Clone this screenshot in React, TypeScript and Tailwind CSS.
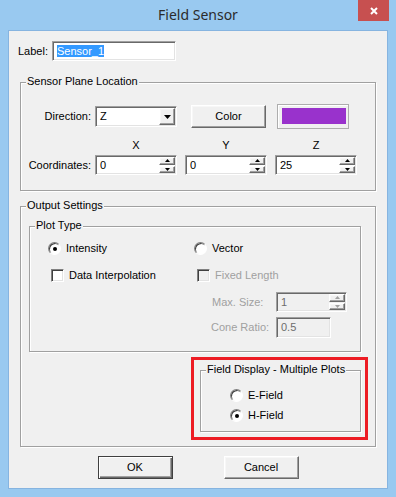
import type { ReactNode } from "react";

const font = "font-['Liberation_Sans',Arial,sans-serif]";
const sunken =
  "border border-t-[#a0a0a0] border-l-[#a0a0a0] border-r-white border-b-white shadow-[inset_1px_1px_0_#696969,inset_-1px_-1px_0_#e3e3e3]";
const raised =
  "border border-t-white border-l-white border-r-[#696969] border-b-[#696969] shadow-[inset_-1px_-1px_0_#a0a0a0,inset_1px_1px_0_#f7f7f7]";

function Group({ title, className, children }: { title: string; className: string; children?: ReactNode }) {
  return (
    <div className={`relative border border-[#a0a0a0] shadow-[inset_1px_1px_0_#fff,1px_1px_0_#fff] ${className}`}>
      <span className="absolute left-[5px] -top-[8px] px-[1px] bg-[#f0f0f0] leading-[13px] whitespace-nowrap">
        {title}
      </span>
      {children}
    </div>
  );
}

function Arrow({ up, w = 5, h = 3, color = "#000" }: { up?: boolean; w?: number; h?: number; color?: string }) {
  return (
    <svg width={w} height={h} viewBox={`0 0 ${w} ${h}`}>
      <path d={up ? `M0 ${h}L${w / 2} 0L${w} ${h}Z` : `M0 0L${w} 0L${w / 2} ${h}Z`} fill={color} />
    </svg>
  );
}

function Spin({ value, w, disabled }: { value: string; w: string; disabled?: boolean }) {
  return (
    <div className={`${w} h-[20px] ${sunken} ${disabled ? "bg-[#f0f0f0] text-[#6d6d6d]" : "bg-white"} flex items-center`}>
      <span className="flex-1 pl-[4px] leading-[13px]">{value}</span>
      <div className="w-[16px] h-full py-[1px] mr-[1px] flex flex-col gap-[1px]">
        <div className={`flex-1 ${raised} bg-[#f0f0f0] flex items-center justify-center`}>
          <Arrow up color={disabled ? "#a0a0a0" : "#000"} />
        </div>
        <div className={`flex-1 ${raised} bg-[#f0f0f0] flex items-center justify-center`}>
          <Arrow color={disabled ? "#a0a0a0" : "#000"} />
        </div>
      </div>
    </div>
  );
}

function Radio({ checked, label }: { checked?: boolean; label: string }) {
  return (
    <div className="flex items-center h-[13px]">
      <span className="w-[13px] h-[13px] rounded-full border border-t-[#808080] border-l-[#808080] border-r-white border-b-white bg-white shadow-[inset_1px_1px_0_#404040] flex items-center justify-center">
        {checked && <span className="w-[4px] h-[4px] rounded-full bg-black" />}
      </span>
      <span className="ml-[5px] leading-[13px]">{label}</span>
    </div>
  );
}

function Check({ label, disabled }: { label: string; disabled?: boolean }) {
  return (
    <div className="flex items-center h-[13px] ml-[3px]">
      <span
        className={`w-[13px] h-[13px] border border-t-[#808080] border-l-[#808080] border-r-white border-b-white shadow-[inset_1px_1px_0_#404040,inset_-1px_-1px_0_#e3e3e3] ${
          disabled ? "bg-[#f0f0f0]" : "bg-white"
        }`}
      />
      <span className={`ml-[5px] leading-[13px] ${disabled ? "text-[#a0a0a0]" : ""}`}>{label}</span>
    </div>
  );
}

function Button({ label, def, className = "" }: { label: string; def?: boolean; className?: string }) {
  return (
    <div
      className={`w-[75px] h-[23px] bg-[#f0f0f0] flex items-center justify-center leading-[13px] ${
        def
          ? "border border-[#404040] shadow-[inset_1px_1px_0_#fff,inset_-1px_-1px_0_#696969,inset_-2px_-2px_0_#a0a0a0]"
          : raised
      } ${className}`}
    >
      {label}
    </div>
  );
}

export default function App() {
  return (
    <div className={`w-[396px] h-[497px] bg-[#99c9f0] flex flex-col ${font} text-[11px] text-black`}>
      <div className="relative h-[30px] flex items-center justify-center">
        <span className="font-['Noto_Sans',sans-serif] text-[14px] text-[#2b2b2b] leading-none">Field Sensor</span>
        <div className="absolute right-[7px] top-0 w-[31px] h-[21px] bg-[#c75050] flex items-center justify-center">
          <svg width="8" height="8" viewBox="0 0 8 8">
            <path d="M1 1L7 7M7 1L1 7" stroke="white" strokeWidth="2" />
          </svg>
        </div>
      </div>

      <div className="mx-[8px] h-[459px] bg-[#f0f0f0] border border-[#86b4e0] px-[11px] flex flex-col">
        {/* Label */}
        <div className="mt-[10px] -ml-[2px] flex items-center">
          <span className="w-[34px] leading-[13px]">Label:</span>
          <div className={`w-[124px] h-[20px] bg-white ${sunken} flex items-center pl-[4px]`}>
            <span className="bg-[#3399ff] text-white leading-[12px]">Sensor_1</span>
          </div>
        </div>

        {/* Sensor Plane Location */}
        <Group title="Sensor Plane Location" className="mt-[21px] h-[109px] pt-[21px]">
          <div className="flex items-center h-[25px]">
            <span className="w-[70px] text-right mr-[4px] leading-[13px]">Direction:</span>
            <div className={`w-[82px] h-[21px] bg-white ${sunken} flex items-center`}>
              <span className="flex-1 pl-[4px] leading-[13px]">Z</span>
              <div className={`w-[16px] h-[17px] mr-[1px] bg-[#f0f0f0] ${raised} flex items-center justify-center`}>
                <Arrow w={7} h={4} />
              </div>
            </div>
            <Button label="Color" className="ml-[14px]" />
            <div className="ml-[11px] w-[72px] h-[25px] border border-[#adadad] shadow-[inset_1px_1px_0_#fff] pl-[4px] pr-[2px] pt-[3px]">
              <div className="w-[64px] h-[16px] bg-[#9932cc]" />
            </div>
          </div>
          <div className="mt-[10px] ml-[74px] grid grid-cols-[82px_82px_82px] gap-x-[8px] leading-[13px] text-center">
            <span>X</span>
            <span>Y</span>
            <span>Z</span>
          </div>
          <div className="mt-[3px] flex items-center">
            <span className="w-[70px] text-right mr-[4px] leading-[13px]">Coordinates:</span>
            <div className="flex gap-[8px]">
              <Spin value="0" w="w-[82px]" />
              <Spin value="0" w="w-[82px]" />
              <Spin value="25" w="w-[82px]" />
            </div>
          </div>
        </Group>

        {/* Output Settings */}
        <Group title="Output Settings" className="mt-[15px] h-[241px] pt-[19px] flex flex-col">
          <Group title="Plot Type" className="ml-[8px] w-[332px] h-[126px] pt-[15px] pl-[18px]">
            <div className="grid grid-cols-[146px_1fr]">
              <Radio checked label="Intensity" />
              <Radio label="Vector" />
            </div>
            <div className="mt-[14px] grid grid-cols-[146px_1fr]">
              <Check label="Data Interpolation" />
              <Check label="Fixed Length" disabled />
            </div>
            <div className="mt-[10px] ml-[164px] flex items-center text-[#a0a0a0]">
              <span className="w-[64px] leading-[13px]">Max. Size:</span>
              <Spin value="1" w="w-[71px]" disabled />
            </div>
            <div className="mt-[5px] ml-[163px] flex items-center text-[#a0a0a0]">
              <span className="w-[65px] leading-[13px]">Cone Ratio:</span>
              <div className={`w-[55px] h-[21px] bg-[#f0f0f0] ${sunken} flex items-center pl-[4px] text-[#6d6d6d]`}>
                0.5
              </div>
            </div>
          </Group>

          <div className="mt-[5px] self-end mr-[7px] w-[177px] h-[83px] border-[3px] border-[#ed1c24]">
            <Group title="Field Display - Multiple Plots" className="ml-[6px] mt-[10px] w-[161px] h-[62px] pt-[18px] pl-[29px]">
              <Radio label="E-Field" />
              <div className="mt-[7px]">
                <Radio checked label="H-Field" />
              </div>
            </Group>
          </div>
        </Group>

        <div className="mt-[9px] flex justify-center gap-[51px]">
          <Button label="OK" def />
          <Button label="Cancel" />
        </div>
      </div>
    </div>
  );
}
